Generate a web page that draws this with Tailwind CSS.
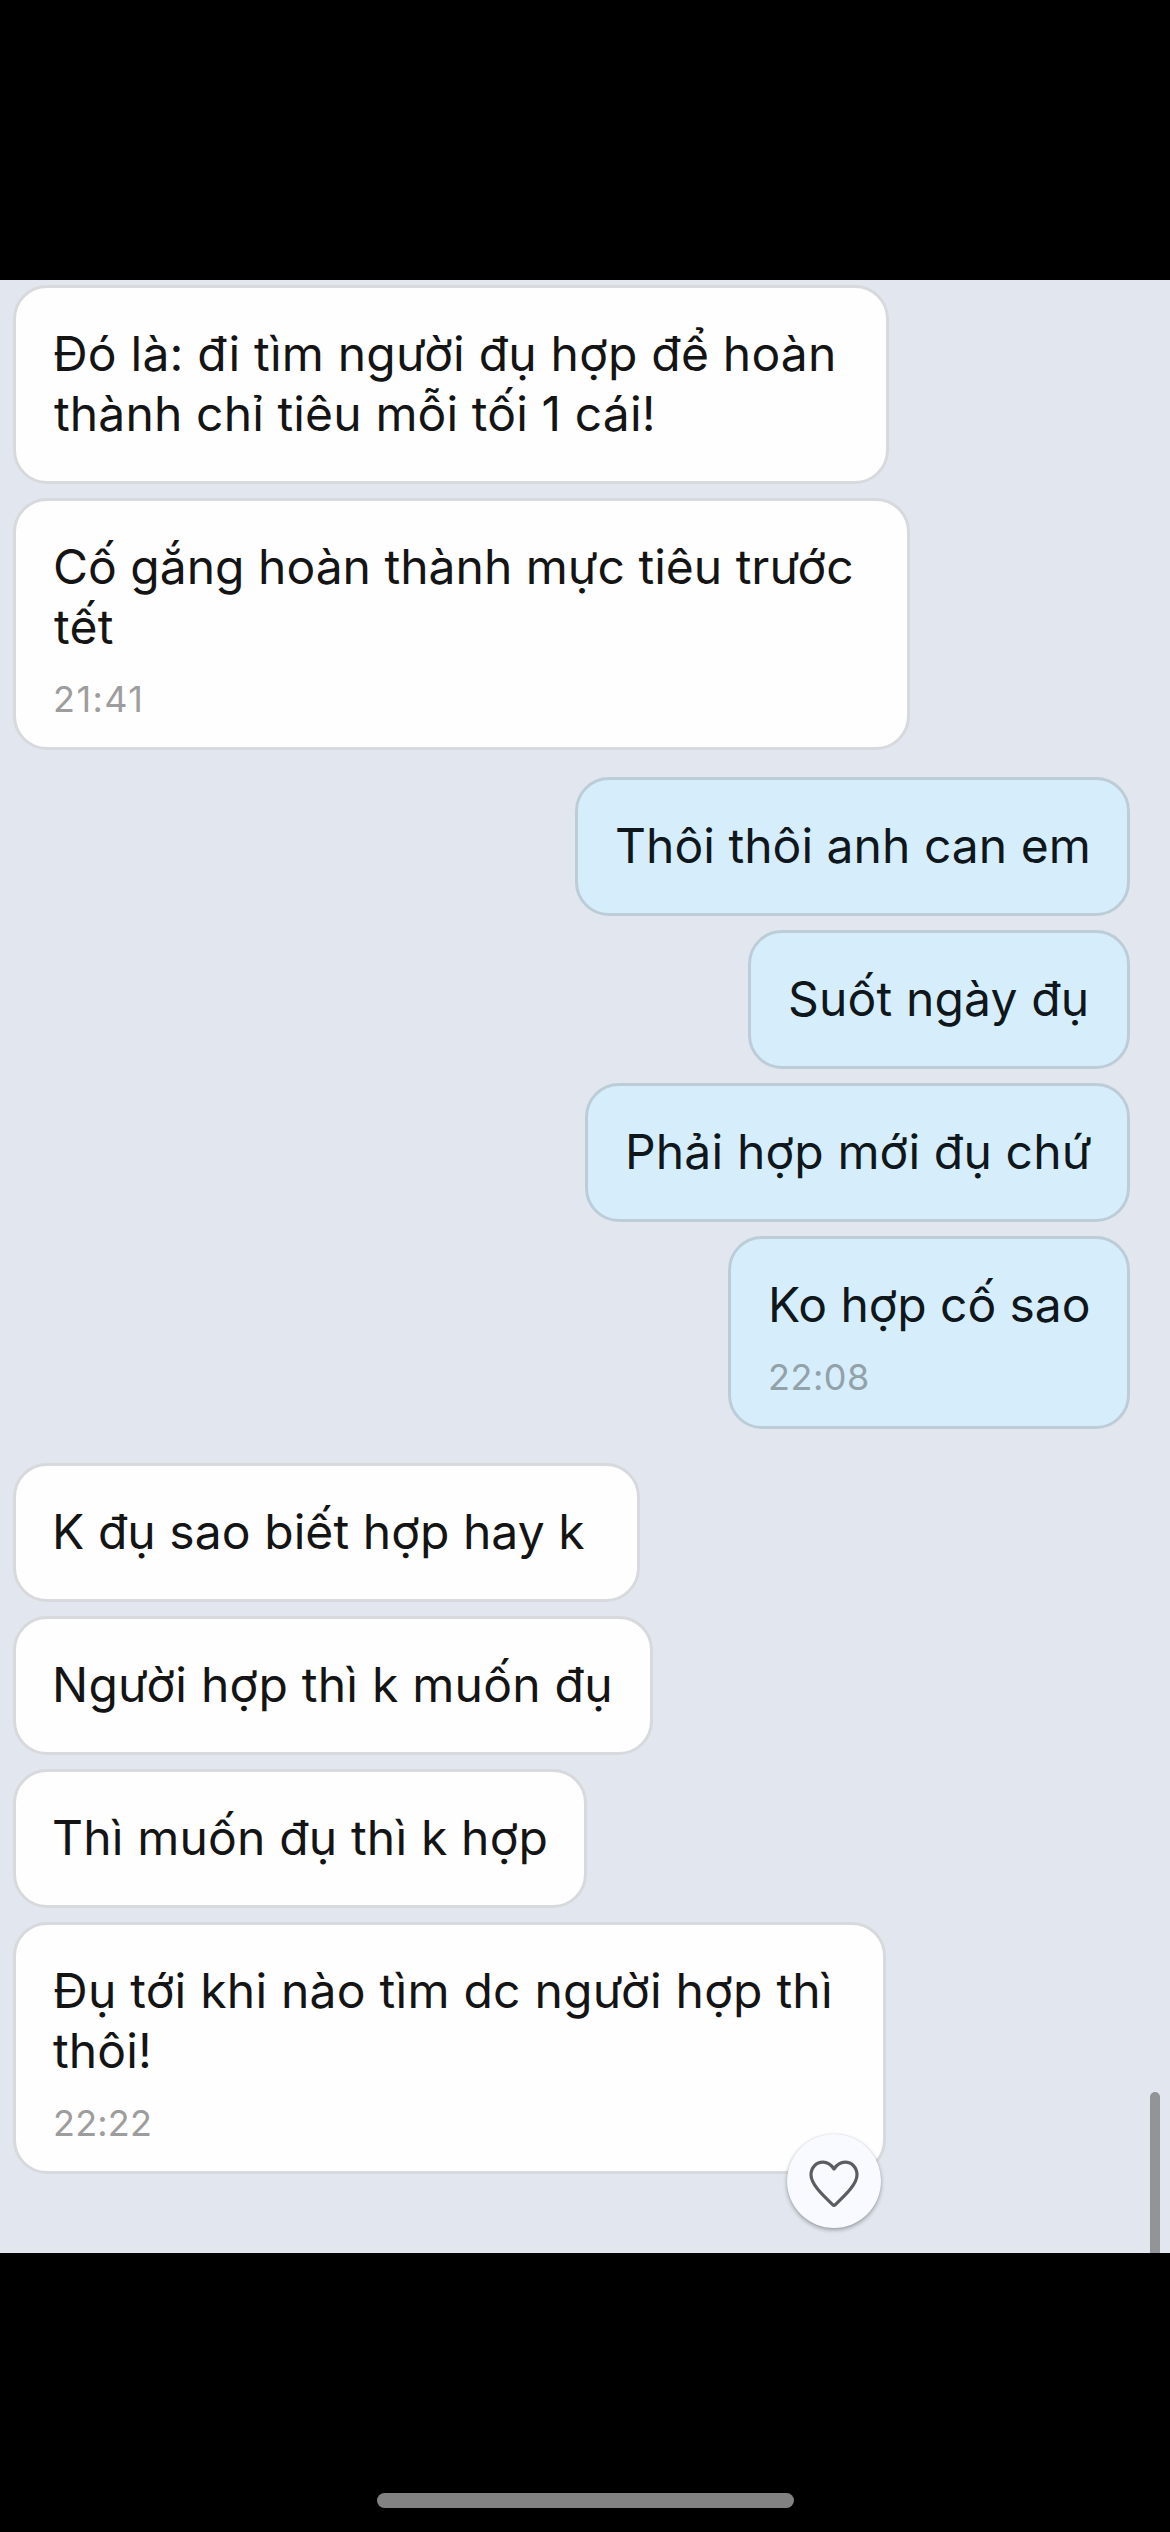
<!DOCTYPE html>
<html lang="vi">
<head>
<meta charset="utf-8">
<title>Chat</title>
<script src="https://cdn.jsdelivr.net/npm/@tailwindcss/browser@4"></script>
</head>
<body class="flex h-[2532px] w-[1170px] flex-col overflow-hidden bg-black font-['Inter',sans-serif] text-[48px] leading-[60px] whitespace-nowrap text-[#141414]">
  <main class="relative mt-[280px] flex h-[1973px] flex-col bg-[#e2e7ef] pt-[5px] pr-10 pl-[13px]">
    <!-- Incoming -->
    <section class="flex flex-col items-start gap-3.5">
      <div class="h-[199px] w-[876px] rounded-[34px] border-3 border-[#d8d9dc] bg-[#fefefe] pt-9 pl-[37px]">
        <p class="tracking-[0.208px]">Đó là: đi tìm người đụ hợp để hoàn</p>
        <p class="pl-px tracking-[0.132px]">thành chỉ tiêu mỗi tối 1 cái!</p>
      </div>
      <div class="h-[252px] w-[897px] rounded-[34px] border-3 border-[#d8d9dc] bg-[#fefefe] pt-9 pl-[37px]">
        <p>Cố gắng hoàn thành mực tiêu trước</p>
        <p class="pl-px tracking-[0.241px]">tết</p>
        <time class="mt-5 block text-[36px] leading-[44px] tracking-[1.445px] text-[#9d9d9d]">21:41</time>
      </div>
    </section>

    <!-- Outgoing -->
    <section class="mt-[27px] flex flex-col items-end gap-3.5">
      <div class="h-[139px] w-[555px] rounded-[34px] border-3 border-[#bccdd8] bg-[#d6eefb] pt-9 pl-[37px] text-[#0f171c]">
        <p class="tracking-[0.034px]">Thôi thôi anh can em</p>
      </div>
      <div class="h-[139px] w-[382px] rounded-[34px] border-3 border-[#bccdd8] bg-[#d6eefb] pt-9 pl-[37px] text-[#0f171c]">
        <p class="tracking-[0.147px]">Suốt ngày đụ</p>
      </div>
      <div class="h-[139px] w-[545px] rounded-[34px] border-3 border-[#bccdd8] bg-[#d6eefb] pt-9 pl-[37px] text-[#0f171c]">
        <p class="tracking-[0.154px]">Phải hợp mới đụ chứ</p>
      </div>
      <div class="h-[193px] w-[402px] rounded-[34px] border-3 border-[#bccdd8] bg-[#d6eefb] pt-9 pl-[37px] text-[#0f171c]">
        <p class="tracking-[-0.07px]">Ko hợp cố sao</p>
        <time class="mt-5 block text-[36px] leading-[44px] tracking-[0.502px] text-[#93a1a9]">22:08</time>
      </div>
    </section>

    <!-- Incoming -->
    <section class="mt-[34px] flex flex-col items-start gap-3.5">
      <div class="h-[139px] w-[627px] rounded-[34px] border-3 border-[#d8d9dc] bg-[#fefefe] pt-9 pl-9">
        <p class="tracking-[0.067px]">K đụ sao biết hợp hay k</p>
      </div>
      <div class="h-[139px] w-[640px] rounded-[34px] border-3 border-[#d8d9dc] bg-[#fefefe] pt-9 pl-9">
        <p class="tracking-[0.24px]">Người hợp thì k muốn đụ</p>
      </div>
      <div class="h-[139px] w-[574px] rounded-[34px] border-3 border-[#d8d9dc] bg-[#fefefe] pt-9 pl-9">
        <p class="tracking-[0.179px]">Thì muốn đụ thì k hợp</p>
      </div>
      <div class="relative h-[252px] w-[873px] rounded-[34px] border-3 border-[#d8d9dc] bg-[#fefefe] pt-9 pl-[37px]">
        <p class="tracking-[0.24px]">Đụ tới khi nào tìm dc người hợp thì</p>
        <p class="tracking-[0.127px]">thôi!</p>
        <time class="mt-5 block text-[36px] leading-[44px] tracking-[0.191px] text-[#9d9d9d]">22:22</time>
        <button class="absolute top-[209px] left-[771px] size-[94px] rounded-full bg-[#f8faff] shadow-[0_2px_4px_rgba(0,0,0,0.32),0_0_1px_rgba(0,0,0,0.15)]" aria-label="Thích">
          <svg class="size-[94px]" viewBox="0 0 94 94" fill="none" stroke="#5c5d60" stroke-width="3.2" stroke-linejoin="round">
            <path d="M47 35C44.2 30.8 40.6 28.2 36 28.2C29 28.2 24 33.6 24 40.8C24 51 38 63.2 45.6 70.6Q47 72 48.4 70.6C56 63.2 70 51 70 40.8C70 33.6 65 28.2 58 28.2C53.4 28.2 49.8 30.8 47 35Z"/>
          </svg>
        </button>
      </div>
    </section>

    <!-- Scroll indicator -->
    <div class="absolute right-2.5 bottom-0 h-[161px] w-2.5 rounded-t-full bg-[#929498]"></div>
  </main>

  <!-- Home indicator -->
  <div class="mx-auto mt-[240px] h-[15px] w-[417px] rounded-full bg-[#828282]"></div>
</body>
</html>
